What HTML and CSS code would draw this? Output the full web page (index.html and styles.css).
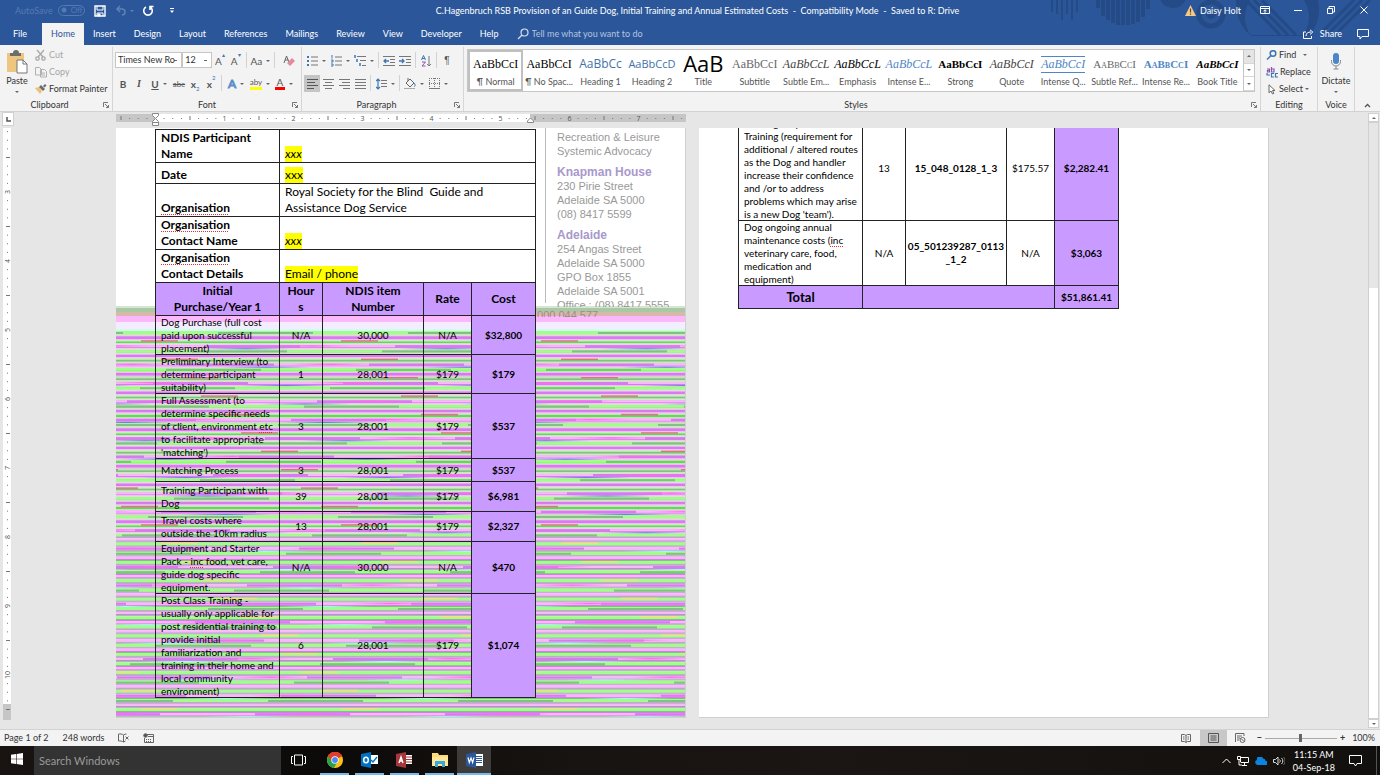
FILE: index.html
```html
<!DOCTYPE html>
<html lang="en">
<head>
    <meta charset="utf-8">
    <title>C.Hagenbruch RSB Provision of an Guide Dog - Word</title>
    <meta name="viewport" content="width=device-width,initial-scale=1.0">
    <link rel="stylesheet" href="styles.css">
    <script src="script.js" defer></script>
</head>
<body>
    <header class="top">
        <svg class="top-art" width="340" height="36" viewBox="0 0 340 36" fill="none" stroke="#244b86">
            <path d="M12 0v12M17 0v14M22 0v20M27 0v14M32 0v20M37 0v12" stroke-width="2"/>
            <path d="M58 0v8M63 0v16M68 0v20M73 0v23M78 0v25M83 0v25M88 0v25M93 0v24M98 0v22M103 0v17M108 0v9" stroke-width="4"/>
            <circle cx="133" cy="-6" r="14" fill="#244b86" stroke="none"/>
            <circle cx="171" cy="14" r="12" stroke-width="5"/>
            <circle cx="171" cy="14" r="5" fill="#244b86" stroke="none"/>
            <path d="M196 0a42 42 0 0 0 14 35h60a42 42 0 0 0 8-35h-14a32 32 0 1 1-54 0z" fill="#244b86" stroke="none"/>
            <path d="M206 0l34 35M214 0l34 35M222 0l34 35" stroke-width="3"/>
            <path d="M282 32l32-32M290 32l32-32M298 32l32-32" stroke-width="3"/>
        </svg>
        <div class="titlebar">
            <div class="quick">
                <label class="autosave">AutoSave <input type="checkbox" disabled><span class="toggle">Off</span></label>
                <button class="qbtn" aria-label="Save"><svg width="12" height="12" viewBox="0 0 12 12" fill="none" stroke="#fff"><path d="M1 1h10v10H1z" stroke-width="1.4"/><path d="M3 1v4h6V1M3 11V8h6v3" /><path d="M4 9h2v2H4z" fill="#fff"/></svg></button>
                <button class="qbtn dim" aria-label="Undo"><svg width="12" height="12" viewBox="0 0 12 12" fill="none" stroke="#5e82b8" stroke-width="1.5"><path d="M5 1L2 4l3 3M2 4h5a3 3 0 0 1 0 6"/></svg><i class="caret"></i></button>
                <button class="qbtn" aria-label="Redo"><svg width="12" height="12" viewBox="0 0 12 12" fill="none" stroke="#fff" stroke-width="1.6"><path d="M4 2a4.300 4.300 0 1 0 4 0M8 5V1.500h3.500"/></svg></button>
                <button class="qbtn" aria-label="Customize"><svg width="6" height="6" viewBox="0 0 6 6"><path d="M1 .5h4" stroke="#fff"/><path d="M1 2.500h4L3 5z" fill="#fff"/></svg></button>
            </div>
            <div class="doc-title">C.Hagenbruch RSB Provision of an Guide Dog, Initial Training and Annual Estimated Costs &nbsp;-&nbsp; Compatibility Mode &nbsp;-&nbsp; Saved to R: Drive</div>
            <div class="window">
                <span class="user"><svg width="11" height="11" viewBox="0 0 11 11"><path d="M5.500 0L11 11H0z" fill="#f5c987"/><path d="M5.500 3.500v4M5.500 8.500v1.300" stroke="#5b4a2c" stroke-width="1.200"/></svg> Daisy Holt</span>
                <button aria-label="Ribbon display"><svg width="10" height="8" viewBox="0 0 10 8" fill="none" stroke="#fff"><path d="M.5.5h9v7h-9zM.5 2.500h9M5 7V4M3.500 5L5 3.800 6.500 5"/></svg></button>
                <button aria-label="Minimize"><svg width="8" height="8" viewBox="0 0 8 8" stroke="#fff"><path d="M0 4.500h8"/></svg></button>
                <button aria-label="Restore"><svg width="8" height="8" viewBox="0 0 8 8" fill="none" stroke="#fff"><path d="M.5 2.500h5v5h-5zM2 2V.5h5.500V6H6"/></svg></button>
                <button aria-label="Close"><svg width="8" height="8" viewBox="0 0 8 8" stroke="#fff"><path d="M.5.5l7 7M7.500.5l-7 7"/></svg></button>
            </div>
        </div>
        <nav class="tabs">
            <button class="file">File</button>
            <button class="active">Home</button>
            <button>Insert</button>
            <button>Design</button>
            <button>Layout</button>
            <button>References</button>
            <button>Mailings</button>
            <button>Review</button>
            <button>View</button>
            <button>Developer</button>
            <button>Help</button>
            <label class="tell"><svg width="12" height="12" viewBox="0 0 12 12" fill="none" stroke="#d5dff0" stroke-width="1.200"><circle cx="7.500" cy="4.500" r="3.500"/><path d="M5 7L1 11"/></svg><input type="text" placeholder="Tell me what you want to do" aria-label="Tell me what you want to do"></label>
            <button class="share"><svg width="11" height="10" viewBox="0 0 11 10" fill="none" stroke="#fff"><path d="M3 3H.5v6.500h8V7M3 7c0-3 2-4 5-4M7 .8L9.800 3 7 5.500"/></svg> Share</button>
            <button class="comment" aria-label="Comments"><svg width="12" height="11" viewBox="0 0 12 11" fill="none" stroke="#fff"><path d="M.5.5h11v7H5L3 10V7.500H.5z"/></svg></button>
        </nav>
    </header>

    <section class="ribbon">
        <div class="group clipboard">
            <div class="body">
                <button class="big"><svg width="22" height="24" viewBox="0 0 22 24"><rect x="1" y="3" width="17" height="19" fill="#edc77f"/><path d="M4 3h3a3 3 0 0 1 6 0h2v3H4z" fill="#6d6d6d"/><path d="M11 10h6l4 4v9H11z" fill="#fff" stroke="#777"/><path d="M17 10v4h4" fill="none" stroke="#777"/></svg>Paste<i class="caret"></i></button>
                <div class="stack">
                    <button class="off"><svg width="12" height="12" viewBox="0 0 12 12" fill="none" stroke="#a9a9a9" stroke-width="1.300"><path d="M2 1l6 7M9 1L3 8"/><circle cx="2.500" cy="9.500" r="1.700"/><circle cx="8.500" cy="9.500" r="1.700"/></svg>Cut</button>
                    <button class="off"><svg width="12" height="12" viewBox="0 0 12 12" fill="#f3f3f3" stroke="#b0b0b0"><path d="M.5 1.500h4l2 2V9h-6zM5.500 3.500h4l2 2V11h-6zM7 7h3M7 9h3"/></svg>Copy</button>
                    <button><svg width="12" height="12" viewBox="0 0 12 12"><path d="M0 5l4-1 3 4-2 3c-1-2-3-3-5-6z" fill="#edc077"/><path d="M4 4l2-2 4 4-2 2zM8 3l2-2 1.500 1.500-2 2z" fill="#6b6b6b"/></svg>Format Painter</button>
                </div>
            </div>
            <div class="label">Clipboard<svg class="launch" width="6" height="6"><use href="#launch"/></svg></div>
        </div>

        <div class="group font">
            <div class="body rows">
                <div class="tools">
                    <select class="face" aria-label="Font"><option>Times New Ro</option></select>
                    <select class="size" aria-label="Font size"><option>12</option></select>
                    <button class="grow">A<sup>▴</sup></button>
                    <button class="shrink">A<sup>▾</sup></button>
                    <hr>
                    <button class="drop">Aa<i class="caret"></i></button>
                    <hr>
                    <button class="last" aria-label="Clear formatting"><svg width="12" height="12" viewBox="0 0 12 12"><path d="M1 8L3.500 1 6 7M2 5h3" fill="none" stroke="#666"/><path d="M4 8l5-5 3 3-5 5z" fill="#e58a9b"/></svg></button>
                </div>
                <div class="tools">
                    <button><b>B</b></button>
                    <button><em class="ital">I</em></button>
                    <button class="drop"><u><b>U</b></u><i class="caret"></i></button>
                    <button><s>abc</s></button>
                    <button><b>x</b><sub>2</sub></button>
                    <button><b>x</b><sup>2</sup></button>
                    <hr>
                    <button class="drop"><span class="glow">A</span><i class="caret"></i></button>
                    <button class="drop"><span class="mark">aby</span><i class="caret"></i></button>
                    <button class="drop"><span class="ink">A</span><i class="caret"></i></button>
                </div>
            </div>
            <div class="label">Font<svg class="launch" width="6" height="6"><use href="#launch"/></svg></div>
        </div>

        <div class="group paragraph">
            <div class="body rows">
                <div class="tools">
                    <button class="drop" aria-label="Bullets"><svg width="11" height="12" viewBox="0 0 11 12"><path d="M0 2h2M0 6h2M0 10h2" stroke="#3b77b7" stroke-width="2"/><path d="M4 2h7M4 6h7M4 10h7" stroke="#777"/></svg><i class="caret"></i></button>
                    <button class="drop" aria-label="Numbering"><svg width="11" height="12" viewBox="0 0 11 12"><path d="M1 0v3.500M0 5h2v2H0M0 9h2v2H0" stroke="#3b77b7" fill="none"/><path d="M4 2h7M4 6h7M4 10h7" stroke="#777"/></svg><i class="caret"></i></button>
                    <button class="drop" aria-label="Multilevel list"><svg width="12" height="12" viewBox="0 0 12 12"><path d="M1 0v3M3 4v3M6 8v3" stroke="#3b77b7" stroke-width="1.500"/><path d="M3 1.500h9M6 5.500h6M8 10.500h4" stroke="#777"/></svg><i class="caret"></i></button>
                    <hr>
                    <button aria-label="Decrease indent"><svg width="12" height="12" viewBox="0 0 12 12" fill="none"><path d="M0 1.500h12M7 4.500h5M7 7.500h5M0 10.500h12" stroke="#777"/><path d="M6 6H1M3 4L1 6l2 2" stroke="#3b77b7" stroke-width="1.300"/></svg></button>
                    <button aria-label="Increase indent"><svg width="12" height="12" viewBox="0 0 12 12" fill="none"><path d="M0 1.500h12M7 4.500h5M7 7.500h5M0 10.500h12" stroke="#777"/><path d="M0 6h5M3 4l2 2-2 2" stroke="#3b77b7" stroke-width="1.300"/></svg></button>
                    <hr>
                    <button aria-label="Sort"><svg width="11" height="12" viewBox="0 0 11 12" fill="none"><path d="M.5 5l2-4.500 2 4.500M1 3.500h3" stroke="#3b77b7"/><path d="M1 7h3.500L1 11h3.500" stroke="#8a55b0"/><path d="M8 1v10M6 9l2 2 2-2" stroke="#777"/></svg></button>
                    <hr>
                    <button class="pilcrow">¶</button>
                </div>
                <div class="tools">
                    <button class="on" aria-label="Align left"><svg width="11" height="11"><path d="M0 1.500h11M0 4.500h8M0 7.500h11M0 10.500h7" stroke="#555"/></svg></button>
                    <button aria-label="Center"><svg width="11" height="11"><path d="M0 1.500h11M2 4.500h7M0 7.500h11M2 10.500h7" stroke="#777"/></svg></button>
                    <button aria-label="Align right"><svg width="11" height="11"><path d="M0 1.500h11M3 4.500h8M0 7.500h11M4 10.500h7" stroke="#777"/></svg></button>
                    <button aria-label="Justify"><svg width="11" height="11"><path d="M0 1.500h11M0 4.500h11M0 7.500h11M0 10.500h11" stroke="#777"/></svg></button>
                    <hr>
                    <button class="drop" aria-label="Line spacing"><svg width="11" height="12" viewBox="0 0 11 12" fill="none"><path d="M2 1v10M0 3l2-2 2 2M0 9l2 2 2-2" stroke="#3b77b7" stroke-width="1.200"/><path d="M5 2.500h6M5 5.500h6M5 8.500h6" stroke="#777"/></svg><i class="caret"></i></button>
                    <hr>
                    <button class="drop" aria-label="Shading"><svg width="12" height="12" viewBox="0 0 12 12" fill="none" stroke="#666"><path d="M2 5l4-4 4 4-4 4zM4 3V0"/><path d="M10 5c2 2 1 4 0 3" stroke="#3b77b7"/><path d="M0 10.500h11" stroke="#aaa"/></svg><i class="caret"></i></button>
                    <button class="drop" aria-label="Borders"><svg width="11" height="11" fill="none" stroke="#777"><path d="M.5 0v11M5.500 0v11M10.500 0v11M0 .5h11M0 5.500h11" stroke-dasharray="1 1"/><path d="M0 10.500h11"/></svg><i class="caret"></i></button>
                </div>
            </div>
            <div class="label">Paragraph<svg class="launch" width="6" height="6"><use href="#launch"/></svg></div>
        </div>

        <div class="group styles">
            <div class="body gallery">
                <button class="style on"><span>AaBbCcI</span>¶ Normal</button>
                <button class="style"><span>AaBbCcI</span>¶ No Spac...</button>
                <button class="style"><span class="h1">AaBbCc</span>Heading 1</button>
                <button class="style"><span class="h2">AaBbCcD</span>Heading 2</button>
                <button class="style"><span class="title">AaB</span>Title</button>
                <button class="style"><span class="gray">AaBbCcI</span>Subtitle</button>
                <button class="style"><span class="dark it">AaBbCcL</span>Subtle Em...</button>
                <button class="style"><span class="it">AaBbCcL</span>Emphasis</button>
                <button class="style"><span class="blue it">AaBbCcL</span>Intense E...</button>
                <button class="style"><span class="bold">AaBbCcI</span>Strong</button>
                <button class="style"><span class="dark it">AaBbCcI</span>Quote</button>
                <button class="style"><span class="blue it lined">AaBbCcI</span>Intense Q...</button>
                <button class="style"><span class="gray caps">AaBbCcI</span>Subtle Ref...</button>
                <button class="style"><span class="blue bold caps">AaBbCcI</span>Intense Re...</button>
                <button class="style"><span class="bold it">AaBbCcI</span>Book Title</button>
                <div class="scroller">
                    <button class="dim" aria-label="Previous styles"><i class="caret up"></i></button>
                    <button aria-label="Next styles"><i class="caret"></i></button>
                    <button aria-label="More styles"><i class="caret more"></i></button>
                </div>
            </div>
            <div class="label">Styles<svg class="launch" width="6" height="6"><use href="#launch"/></svg></div>
        </div>

        <div class="group editing">
            <div class="body">
                <div class="stack">
                    <button><svg width="11" height="10" viewBox="0 0 11 10" fill="none" stroke="#3b77b7" stroke-width="1.500"><circle cx="7" cy="3.500" r="2.800"/><path d="M5 5.500L1 9.500"/></svg>Find <i class="caret far"></i></button>
                    <button><svg width="12" height="11" viewBox="0 0 12 11" fill="none" stroke-width="1.200"><path d="M1 2h2.500v3H1.500V3.500H3.500M5.500 0v5H8V2H5.500" stroke="#8a55b0"/><path d="M8 6.500H5.500v3.500H8M12 6.500H9.500V10H12" stroke="#3b77b7"/><path d="M1 6v2h3" stroke="#3b77b7"/></svg>Replace</button>
                    <button><svg width="11" height="11" viewBox="0 0 11 11" fill="#fff" stroke="#666"><path d="M3 .8v8l2-1.800 1.500 3 1.300-.6L6.500 6.500H9z"/></svg>Select<i class="caret"></i></button>
                </div>
            </div>
            <div class="label">Editing</div>
        </div>

        <div class="group voice">
            <div class="body">
                <button class="big"><svg width="14" height="24" viewBox="0 0 14 24" fill="none"><rect x="4" y="3" width="6" height="11" rx="3" fill="#4a86c8"/><path d="M2.500 10v1.500a4.500 4.500 0 0 0 9 0V10M7 16v3M4.500 19h5" stroke="#888"/></svg>Dictate<i class="caret"></i></button>
            </div>
            <div class="label">Voice</div>
        </div>
        <button class="collapse" aria-label="Collapse the ribbon"><svg width="7" height="5" fill="none" stroke="#555" stroke-width="1.300"><path d="M1 4l2.500-2.500L6 4"/></svg></button>
    </section>

    <main class="workspace">
        <div class="left-rail">
            <button class="tabstop" aria-label="Left tab"><svg width="5" height="5" fill="none" stroke="#555" stroke-width="1.500"><path d="M1 0v4h4"/></svg></button>
            <svg class="vruler" id="vruler" width="8" height="592"></svg>
        </div>
        <div class="canvas">
            <svg class="hruler" id="hruler" width="570" height="15"></svg>
            <div class="pages">
                <article class="page first">
                    <svg class="stripes" id="stripes" width="570" height="411"></svg>
                    <table class="costs">
                        <colgroup><col class="c1"><col class="c2"><col class="c3"><col class="c4"><col class="c5"></colgroup>
                        <tbody class="info">
                            <tr><th>NDIS Participant<br>Name</th><td colspan="4"><mark><i>xxx</i></mark></td></tr>
                            <tr class="short"><th>Date</th><td colspan="4"><mark>xxx</mark></td></tr>
                            <tr><th><u class="typo">Organisation</u></th><td colspan="4">Royal Society for the Blind&nbsp; Guide and<br>Assistance Dog Service</td></tr>
                            <tr><th><u class="typo">Organisation</u><br>Contact Name</th><td colspan="4"><mark><i>xxx</i></mark></td></tr>
                            <tr><th><u class="typo">Organisation</u><br>Contact Details</th><td colspan="4"><mark>Email / phone</mark></td></tr>
                        </tbody>
                        <tbody class="head">
                            <tr><th>Initial<br>Purchase/Year 1</th><th>Hour<br>s</th><th>NDIS item<br>Number</th><th>Rate</th><th>Cost</th></tr>
                        </tbody>
                        <tbody class="items">
                            <tr><td><p>Dog Purchase (full cost<br>paid upon successful<br>placement)</p></td><td>N/A</td><td>30,000</td><td>N/A</td><td>$32,800</td></tr>
                            <tr><td><p>Preliminary Interview (to<br>determine participant<br>suitability)</p></td><td>1</td><td>28,001</td><td>$179</td><td>$179</td></tr>
                            <tr><td><p>Full Assessment (to<br>determine specific needs<br>of client, environment <u class="typo">etc</u><br>to facilitate appropriate<br>'matching')</p></td><td>3</td><td>28,001</td><td>$179</td><td>$537</td></tr>
                            <tr class="h23"><td><p>Matching Process</p></td><td>3</td><td>28,001</td><td>$179</td><td>$537</td></tr>
                            <tr class="h30"><td><p>Training Participant with<br>Dog</p></td><td>39</td><td>28,001</td><td>$179</td><td>$6,981</td></tr>
                            <tr class="h30"><td><p>Travel costs where<br>outside the 10km radius</p></td><td>13</td><td>28,001</td><td>$179</td><td>$2,327</td></tr>
                            <tr><td><p>Equipment and Starter<br>Pack - <u class="typo">inc</u> food, vet care,<br>guide dog specific<br>equipment.</p></td><td>N/A</td><td>30,000</td><td>N/A</td><td>$470</td></tr>
                            <tr><td><p>Post Class Training -<br>usually only applicable for<br>post residential training to<br>provide initial<br>familiarization and<br>training in their home and<br>local community<br>environment)</p></td><td>6</td><td>28,001</td><td>$179</td><td>$1,074</td></tr>
                        </tbody>
                    </table>
                    <aside class="letterhead">
                        <p>Recreation &amp; Leisure<br>Systemic Advocacy</p>
                        <p><b>Knapman House</b><br>230 Pirie Street<br>Adelaide SA 5000<br>(08) 8417 5599</p>
                        <p><b>Adelaide</b><br>254 Angas Street<br>Adelaide SA 5000<br>GPO Box 1855<br>Adelaide SA 5001</p>
                        <p class="cut">Office : (08) 8417 5555</p>
                        <p class="cut abn">000 044 577</p>
                    </aside>
                </article>
                <article class="page second">
                    <table class="costs">
                        <colgroup><col class="c1"><col class="c2"><col class="c3"><col class="c4"><col class="c5"></colgroup>
                        <tbody class="items codes">
                            <tr><td><p>Training Requirements<br>Training (requirement for<br>additional / altered routes<br>as the Dog and handler<br>increase their confidence<br>and /or to address<br>problems which may arise<br>is a new Dog 'team').</p></td><td>13</td><td>15_048_0128_1_3</td><td>$175.57</td><td>$2,282.41</td></tr>
                            <tr><td><p>Dog ongoing annual<br>maintenance costs (<u class="typo">inc</u><br>veterinary care, food,<br>medication and<br>equipment)</p></td><td>N/A</td><td>05_501239287_0113<br>_1_2</td><td>N/A</td><td>$3,063</td></tr>
                            <tr class="total h23"><th>Total</th><td colspan="3"></td><td>$51,861.41</td></tr>
                        </tbody>
                    </table>
                </article>
            </div>
        </div>
        <div class="scrollbar">
            <button aria-label="Scroll up"><i class="caret up"></i></button>
            <div class="track"><div class="thumb"></div></div>
            <button aria-label="Scroll down"><i class="caret"></i></button>
        </div>
    </main>

    <footer class="status">
        <span>Page 1 of 2</span>
        <span>248 words</span>
        <svg width="11" height="10" viewBox="0 0 11 10" fill="none" stroke="#666"><path d="M5.500 9V2C4 .8 2 .8.5 1v7c1.500-.2 3.500 0 5 1zM5.500 2c1-.8 2-1 3-1M5.500 9l2-1M7.500 3.500l3 3M10.500 3.500l-3 3"/></svg>
        <svg width="11" height="11" viewBox="0 0 11 11" fill="none" stroke="#666"><path d="M4 1.500h6.500v8h-9V5"/><circle cx="2.500" cy="2.500" r="1.800" fill="#555"/><path d="M3 6.500h1M5 6.500h1M7 6.500h1M3 8.500h1M5 8.500h1M7 8.500h1M5 3.500h5"/></svg>
        <div class="views">
            <button aria-label="Read mode"><svg width="10" height="9" viewBox="0 0 10 9" fill="none" stroke="#666"><path d="M5 1.500v7M.5.5h3L5 1.500 6.500.5h3v7h-3L5 8.500 3.500 7.500h-3zM2 3h1.500M2 5h1.500M6.500 3H8M6.500 5H8"/></svg></button>
            <button class="on" aria-label="Print layout"><svg width="11" height="10" fill="none" stroke="#555"><path d="M.5.5h10v9H.5zM2.500 3h6M2.500 5h6M2.500 7h6"/></svg></button>
            <button aria-label="Web layout"><svg width="11" height="10" viewBox="0 0 11 10" fill="none" stroke="#666"><path d="M.5 9V.5H9V3M2 3h5M2 5h3M2 7h2"/><circle cx="7.500" cy="7" r="2.500"/><path d="M6 5.500l3 3"/></svg></button>
        </div>
        <div class="zoom">
            <button>−</button>
            <input type="range" min="0" max="100" value="50" aria-label="Zoom">
            <button>+</button>
            <span>100%</span>
        </div>
    </footer>

    <div class="taskbar">
        <button class="start" aria-label="Start"><svg width="12" height="12" viewBox="0 0 12 12" fill="#fff"><path d="M0 1.700l5-.7v4.700H0zM5.600.9L12 0v5.700H5.600zM0 6.300h5V11l-5-.7zM5.600 6.300H12V12l-6.400-.9z"/></svg></button>
        <input class="search" type="text" placeholder="Search Windows" aria-label="Search Windows">
        <button class="app plain" aria-label="Task view"><svg width="15" height="12" viewBox="0 0 15 12" fill="none" stroke="#fff"><path d="M3.500 1h8v10h-8zM2 2.500H.5v7H2M13 2.500h1.500v7H13"/></svg></button>
        <button class="app" aria-label="Chrome"><svg width="16" height="16" viewBox="0 0 16 16"><circle cx="8" cy="8" r="8" fill="#fbc116"/><path d="M8 8L1.100 4A8 8 0 0 1 15 4.200z" fill="#e33b2e"/><path d="M8 8L1.100 4a8 8 0 0 0 5.800 11.900L11 9z" fill="#2aa24c"/><path d="M1.100 4A8 8 0 0 1 15 4.200H8L4.700 9.500z" fill="#e33b2e"/><circle cx="8" cy="8" r="3.700" fill="#fff"/><circle cx="8" cy="8" r="2.900" fill="#4a8af4"/></svg></button>
        <button class="app" aria-label="Outlook"><svg width="17" height="16" viewBox="0 0 17 16"><path d="M9 3h8v9H9z" fill="#fff"/><path d="M10 8l2 2 4-5" fill="none" stroke="#0072c6" stroke-width="1.400"/><path d="M0 2l10-2v16L0 14z" fill="#0072c6"/><ellipse cx="5" cy="8" rx="2.300" ry="2.800" fill="none" stroke="#fff" stroke-width="1.500"/></svg></button>
        <button class="app" aria-label="Access"><svg width="17" height="16" viewBox="0 0 17 16"><path d="M9 3h7v9H9z" fill="#fff"/><path d="M9 5h7M9 7.500h7M9 10h7" stroke="#a4373a"/><path d="M0 2l10-2v16L0 14z" fill="#a4373a"/><path d="M3 11l2-6 2 6M3.600 9h2.800" fill="none" stroke="#fff" stroke-width="1.400"/></svg></button>
        <button class="app" aria-label="File Explorer"><svg width="16" height="14" viewBox="0 0 16 14"><path d="M0 0h6l1 2h9v11H0z" fill="#fbdc7b"/><path d="M0 4h16v9H0z" fill="#ffe797"/><path d="M3 14V8h10v6h-3v-3H6v3z" fill="#36a9dd"/></svg></button>
        <button class="app on" aria-label="Word"><svg width="17" height="16" viewBox="0 0 17 16"><path d="M9 2h8v12H9z" fill="#fff"/><path d="M10 4.500h6M10 6.500h6M10 8.500h6M10 10.500h6" stroke="#2b579a"/><path d="M0 2l10-2v16L0 14z" fill="#2b579a"/><path d="M2 5.500l1.300 5L5 6l1.600 4.500L8 5.500" fill="none" stroke="#fff" stroke-width="1.200"/></svg></button>
        <div class="tray">
            <svg width="9" height="6" fill="none" stroke="#fff"><path d="M.5 5l4-4 4 4"/></svg>
            <svg width="12" height="10" viewBox="0 0 12 10" fill="none" stroke="#fff"><path d="M3.500 1.500h8v5h-8zM7.500 7v2.500M5 9.500h5"/><path d="M.5.500h3v3h-3zM2 4v5h3" fill="#111"/></svg>
            <svg width="12" height="8" viewBox="0 0 12 8" fill="#0a84de"><path d="M1 7a2.300 2.300 0 0 1 1-4A3 3 0 0 1 8 1.500 2.500 2.500 0 0 1 10.500 4 2 2 0 0 1 11 8H2z"/></svg>
            <svg width="12" height="10" viewBox="0 0 12 10" fill="none" stroke="#ddd"><path d="M.5 3.500h2L5 1v8L2.500 6.500h-2zM6.500 3.500c1 1 1 2 0 3M8.500 2c1.800 2 1.800 4 0 6"/><path d="M10.500 1c2 2.500 2 5.500 0 8" stroke="#666"/></svg>
            <div class="clock">11:15 AM<br>04-Sep-18</div>
            <svg width="13" height="12" viewBox="0 0 13 12" fill="none" stroke="#fff"><path d="M.5.500h12v8H8L6.500 11 5 8.500H.5z"/></svg>
        </div>
    </div>

    <svg width="0" height="0" class="defs">
        <symbol id="launch" viewBox="0 0 6 6"><path d="M.5 5V.5H5M2 2l3.500 3.500M5.500 3v2.500H3" fill="none" stroke="#777"/></symbol>
    </svg>
</body>
</html>
```
FILE: styles.css
```css
* {
    box-sizing: border-box;
}

body {
    margin: 0;
    height: 100vh;
    display: flex;
    flex-direction: column;
    overflow: hidden;
    font-family: Lato, "Open Sans", sans-serif;
    font-size: 9px;
    line-height: 12px;
    color: #333;
    background: #e6e6e6;
}

button {
    margin: 0;
    padding: 0;
    border: 0;
    background: none;
    font: inherit;
    color: inherit;
    white-space: nowrap;
}

svg {
    flex: none;
}

.defs {
    position: absolute;
}

.caret {
    display: inline-block;
    flex: none;
    border: 2px solid transparent;
    border-top-color: #666;
    border-bottom: 0;
}

.caret.up {
    border: 2px solid transparent;
    border-bottom-color: #666;
    border-top: 0;
}

.caret.more {
    box-shadow: 0 -3px 0 -1px #666;
}

.caret.far {
    margin-left: 5px;
}

/* title bar and tabs */
.top {
    position: relative;
    flex: none;
    background: #2b579a;
    color: #fff;
}

.top-art {
    position: absolute;
    top: 0;
    right: 0;
}

.titlebar,
.tabs {
    position: relative;
    display: flex;
}

.titlebar {
    height: 23px;
    align-items: center;
    padding-bottom: 2px;
}

.quick {
    flex: 1;
    display: flex;
    align-items: center;
    padding-left: 15px;
}

.autosave {
    display: flex;
    align-items: center;
    gap: 5px;
    width: 73px;
    color: #5479b3;
}

.autosave input {
    position: absolute;
    opacity: 0;
}

.toggle {
    border: 1px solid #5479b3;
    border-radius: 6px;
    width: 27px;
    height: 11px;
    line-height: 9px;
    font-size: 8px;
    padding-left: 12px;
    background: radial-gradient(circle at 5px 4px, #5479b3 2px, transparent 3px);
}

.qbtn {
    width: 24px;
    height: 16px;
    display: flex;
    align-items: center;
    justify-content: center;
    gap: 3px;
}

.qbtn.dim .caret {
    border-top-color: #5e82b8;
}

.doc-title {
    white-space: nowrap;
}

.window {
    flex: 1;
    display: flex;
    align-items: center;
    justify-content: flex-end;
}

.window button {
    width: 33px;
    height: 16px;
}

.user {
    display: flex;
    align-items: center;
    gap: 4px;
    margin-right: 7px;
}

.tabs {
    height: 22px;
}

.tabs button {
    padding: 0 9px;
}

.tabs .file {
    padding: 0 15px 0 13px;
}

.tabs .active {
    background: #f3f3f3;
    color: #2b579a;
}

.tell {
    flex: 1;
    display: flex;
    align-items: center;
    gap: 3px;
    padding-left: 9px;
}

.tell input {
    width: 160px;
    border: 0;
    padding: 0;
    background: none;
    font: inherit;
    color: #fff;
}

.tell input::placeholder {
    color: #b4c4de;
}

.tabs .share,
.tabs .comment {
    display: flex;
    align-items: center;
    gap: 6px;
}

.tabs .comment {
    padding: 0 11px 0 6px;
}

/* ribbon */
.ribbon {
    flex: none;
    display: flex;
    height: 67px;
    padding-top: 2px;
    background: #f3f3f3;
    border-bottom: 1px solid #d2d2d2;
}

.group {
    display: flex;
    flex-direction: column;
    border-right: 1px solid #d6d6d6;
}

.group .body {
    flex: 1;
    display: flex;
}

.label {
    position: relative;
    height: 12px;
    text-align: center;
}

.launch {
    position: absolute;
    right: 3px;
    top: 3px;
}

.clipboard { width: 113px; }
.font { width: 189px; }
.paragraph { width: 162px; }
.editing { width: 57px; }
.voice { width: 37px; }

.clipboard .label {
    padding-right: 13px;
}

.paragraph .label {
    padding-right: 12px;
}

.styles {
    flex: 1;
    min-width: 0;
}

.big {
    width: 34px;
    display: flex;
    flex-direction: column;
    align-items: center;
    padding-top: 3px;
    gap: 1px;
}

.voice .big {
    width: 100%;
}

.big .caret {
    margin-top: 3px;
}

.stack {
    display: flex;
    flex-direction: column;
    gap: 5px;
    padding: 2px 0 0 1px;
}

.stack button {
    display: flex;
    align-items: center;
    gap: 2px;
    height: 12px;
}

.editing .stack {
    padding-left: 5px;
}

.off {
    color: #a6a6a6;
}

.rows {
    flex-direction: column;
    padding: 5px 0 0 2px;
    gap: 6px;
}

.tools {
    display: flex;
    height: 17px;
}

.tools hr {
    width: 1px;
    height: 16px;
    margin: 0 2px;
    border: 0;
    background: #d2d2d2;
}

.tools button {
    width: 16px;
    display: flex;
    align-items: center;
    justify-content: center;
    font-size: 10px;
    color: #555;
}

.tools .drop {
    width: 24px;
    gap: 4px;
}

.tools .last {
    width: 24px;
}

.tools .on {
    background: #c5c5c5;
}

.tools select {
    appearance: none;
    border: 1px solid #c6c6c6;
    border-radius: 0;
    background: #fff linear-gradient(#666, #666) no-repeat right 4px center / 3px 1px;
    font: inherit;
    font-size: 9px;
    color: #333;
    padding: 0 2px;
    height: 16px;
}

.face { width: 68px; }
.size { width: 30px; }

.tools sup,
.tools sub {
    font-size: 6px;
    line-height: 6px;
    color: #3b77b7;
}

.tools sup { align-self: flex-start; }
.tools sub { align-self: flex-end; }

.tools s {
    font-size: 8px;
}

.ital {
    font-family: "Liberation Serif", serif;
    font-weight: bold;
}

.glow {
    font-size: 12px;
    color: #fff;
    -webkit-text-stroke: 1px #5a8fc8;
}

.mark,
.ink {
    line-height: 10px;
    border-bottom: 3px solid #ff0;
}

.mark { font-size: 8px; }

.ink {
    padding: 0 2px;
    border-color: #f00;
}

.pilcrow {
    font-family: "Liberation Sans", sans-serif;
}

/* style gallery */
.styles .gallery {
    flex: none;
    height: 43px;
    margin: 2px 5px 7px 3px;
    border: 1px solid #c6c6c6;
    background: #fff;
}

.styles .label {
    margin-top: auto;
    padding-right: 12px;
}

.style {
    flex: 1;
    min-width: 0;
    display: flex;
    flex-direction: column;
    align-items: center;
    padding-top: 3px;
    color: #555;
}

.style.on {
    padding-top: 1px;
    border: 2px solid #c0c0c0;
}

.style span {
    height: 23px;
    line-height: 22px;
    font-family: "Liberation Serif", serif;
    font-size: 12px;
    color: #000;
}

.style .h1,
.style .h2 {
    font-family: "Open Sans", sans-serif;
    color: #4472a8;
}

.style .h2,
.style .bold { font-size: 11px; }

.style .title {
    font-family: "Open Sans", sans-serif;
    font-size: 22px;
    line-height: 20px;
}

.style .gray { color: #666; }
.style .dark { color: #444; }
.style .blue { color: #4f86c6; }
.style .it { font-style: italic; }
.style .bold { font-weight: bold; }

.style .caps {
    font-size: 11px;
    font-variant: small-caps;
}

.style .lined {
    height: 17px;
    line-height: 14px;
    margin: 3px 0;
    border: solid #4f86c6;
    border-width: 1px 0;
}

.scroller {
    display: flex;
    flex-direction: column;
    width: 11px;
    border-left: 1px solid #c6c6c6;
}

.scroller button {
    flex: 1;
    display: flex;
    align-items: center;
    justify-content: center;
    border-bottom: 1px solid #d6d6d6;
}

.scroller .dim {
    background: #e4e4e4;
}

.collapse {
    width: 25px;
    align-self: flex-end;
}

/* document area */
.workspace {
    flex: 1;
    min-height: 0;
    display: flex;
}

.left-rail {
    width: 115px;
    padding-left: 2px;
}

.tabstop {
    display: flex;
    align-items: center;
    justify-content: center;
    width: 12px;
    height: 14px;
    background: #fff;
    border: 1px solid #d0d0d0;
    margin-bottom: 2px;
}

.vruler {
    display: block;
    margin-left: 1px;
    background: #fff;
}

.ruler-text {
    font-family: "Open Sans", sans-serif;
    font-size: 7px;
    fill: #555;
    text-anchor: middle;
}

.canvas {
    flex: 1;
    min-width: 0;
    display: flex;
    flex-direction: column;
}

.hruler {
    display: block;
    margin: 1px 0 0 1px;
}

.pages {
    display: flex;
    gap: 13px;
    padding-left: 1px;
}

.page {
    position: relative;
    display: flex;
    align-items: flex-start;
    width: 570px;
    height: 590px;
    overflow: hidden;
    background: #fff;
    border: solid #d0d0d0;
    border-width: 0 1px 1px 0;
}

.stripes {
    position: absolute;
    left: 0;
    bottom: 0;
}

.costs {
    position: relative;
    flex: none;
    width: 381px;
    margin: 1px 0 0 39px;
    table-layout: fixed;
    border-collapse: collapse;
    font-family: Lato, "Open Sans", sans-serif;
    color: #000;
}

.second .costs {
    margin-top: -12px;
}

.costs .c1 { width: 124px; }
.costs .c2 { width: 43px; }
.costs .c3 { width: 101px; }
.costs .c4 { width: 48px; }
.costs .c5 { width: 64px; }

.costs th,
.costs td {
    padding: 0;
    border: 1px solid #222;
    text-align: center;
    white-space: nowrap;
}

.info th,
.info td,
.head th {
    font-size: 12px;
    line-height: 16px;
}

.info .short { height: 21px; }

.costs .info th,
.costs .info td {
    padding-left: 5px;
    text-align: left;
    vertical-align: bottom;
}

mark {
    display: inline-block;
    background: #ff0;
}

.head th,
.items td:last-child,
.total th,
.total td {
    background: #c99aff;
}

.items td {
    font-size: 10px;
    line-height: 13px;
}

.costs .items td:first-child {
    padding-left: 5px;
    text-align: left;
}

.items p {
    margin: 0 0 -1px;
}

.items td:last-child,
.codes td:nth-child(3) {
    font-weight: bold;
}

.items .h23 { height: 23px; }
.items .h30 { height: 30px; }

.total th {
    font-size: 13px;
    line-height: 16px;
}

.typo {
    text-decoration: underline dotted #e03030 1px;
    text-underline-offset: 2px;
    text-decoration-skip-ink: none;
}

.letterhead {
    position: relative;
    margin-left: 9px;
    padding: 2px 0 0 11px;
    border-left: 1px solid #bbb;
    height: 175px;
    font-family: "Liberation Sans", sans-serif;
    font-size: 11px;
    line-height: 14px;
    white-space: nowrap;
    color: #999;
}

.letterhead p {
    margin: 0 0 7px;
}

.letterhead b {
    color: #a898cc;
    font-size: 12px;
}

.letterhead .cut {
    height: 9px;
    overflow: hidden;
    margin: -7px 0 0;
}

.letterhead .abn {
    height: 6px;
    line-height: 9px;
    margin: 4px 0 0 -20px;
    color: #a08c86;
}

.scrollbar {
    display: flex;
    flex-direction: column;
    width: 12px;
    padding: 1px 1px 1px 0;
}

.scrollbar button {
    height: 11px;
    display: flex;
    align-items: center;
    justify-content: center;
    background: #fff;
    border: 1px solid #d0d0d0;
}

.track {
    flex: 1;
    border: 1px solid #d0d0d0;
}

.thumb {
    margin-top: 165px;
    height: 430px;
    background: #fff;
}

/* status bar */
.status {
    flex: none;
    display: flex;
    align-items: center;
    gap: 14px;
    height: 17px;
    padding-left: 4px;
    background: #f3f3f3;
    border-top: 1px solid #d2d2d2;
}

.views {
    margin-left: auto;
    display: flex;
    align-self: stretch;
}

.views button {
    width: 27px;
    display: flex;
    align-items: center;
    justify-content: center;
}

.views .on {
    background: #c8c8c8;
}

.zoom {
    display: flex;
    align-items: center;
    gap: 3px;
    padding-right: 5px;
    margin-left: -11px;
}

.zoom button {
    font-weight: bold;
}

.zoom span {
    margin-left: 4px;
}

.zoom input {
    appearance: none;
    width: 72px;
    height: 10px;
    margin: 0;
    background: linear-gradient(#aaa, #aaa) no-repeat center / 100% 1px;
}

.zoom input::-webkit-slider-thumb {
    appearance: none;
    width: 3px;
    height: 8px;
    background: #666;
}

/* taskbar */
.taskbar {
    flex: none;
    display: flex;
    height: 29px;
    background: linear-gradient(90deg, #191411, #0c0a09 24%, #171310 40%, #1b1613 60%, #12100e);
    color: #fff;
}

.start {
    width: 34px;
}

.search {
    width: 247px;
    border: 0;
    padding: 0 5px;
    background: #333;
    font: inherit;
    font-size: 11px;
    color: #fff;
}

.search::placeholder {
    color: #9a9a9a;
}

.app {
    position: relative;
    width: 29px;
    margin: 0 3px;
    border-bottom: 2px solid #76b9ed;
    display: flex;
    align-items: center;
    justify-content: center;
}

.app.plain {
    border-color: transparent;
    margin-right: 4px;
}

.app.on {
    width: 34px;
    margin: 0;
    background: #3e3b39;
}

.tray {
    margin-left: auto;
    display: flex;
    align-items: center;
    gap: 6px;
    padding-right: 14px;
    margin-right: 3px;
    border-right: 1px solid #555;
}

.clock {
    padding: 0 8px 0 2px;
    text-align: center;
    line-height: 13px;
}
```
FILE: script.js
```js
const NS = 'http://www.w3.org/2000/svg';

function add(parent, name, attrs, text) {
    const el = document.createElementNS(NS, name);
    for (const key in attrs) {
        el.setAttribute(key, attrs[key]);
    }
    if (text !== undefined) {
        el.textContent = text;
    }
    parent.appendChild(el);
    return el;
}

const INCH = 69;

function horizontalRuler() {
    const svg = document.getElementById('hruler');
    add(svg, 'rect', {x: 0, y: 1, width: 570, height: 8, fill: '#c6c6c6'});
    add(svg, 'rect', {x: 39, y: 1, width: 375, height: 8, fill: '#fff'});
    for (let i = -4; i < 62; i++) {
        const x = 39.5 + i * INCH / 8;
        if (x > 568) {
            break;
        }
        if (i > 0 && i % 8 === 0) {
            add(svg, 'text', {x: x, y: 8, class: 'ruler-text'}, i / 8);
        } else if (i !== 0) {
            const tall = i % 4 === 0;
            add(svg, 'rect', {x: x - 0.5, y: tall ? 3 : 5, width: 1, height: tall ? 4 : 1, fill: '#777'});
        }
    }
    add(svg, 'path', {d: 'M36.500 .5h6v2l-3 3 3 3v4h-6v-4l3-3-3-3zM36.500 9.500h6', fill: '#fff', stroke: '#888'});
    add(svg, 'path', {d: 'M411.500 9.500v-1.500l3-3 3 3v1.500z', fill: '#fff', stroke: '#888'});
}

function verticalRuler() {
    const svg = document.getElementById('vruler');
    add(svg, 'rect', {x: 0, y: 576, width: 8, height: 16, fill: '#c6c6c6'});
    for (let i = -7; i < 61; i++) {
        const y = 64 + i * INCH / 8;
        if (y > 588) {
            break;
        }
        if (i % 8 === 0) {
            add(svg, 'text', {x: 0, y: 0, class: 'ruler-text', transform: `translate(7 ${y}) rotate(-90)`}, 3 + i / 8);
        } else {
            const tall = i % 4 === 0;
            add(svg, 'rect', {x: tall ? 3 : 4, y: y - 0.5, width: tall ? 4 : 1, height: 1, fill: '#777'});
        }
    }
}

// corrupted video memory look behind the lower part of page one
function stripes() {
    const svg = document.getElementById('stripes');
    const rect = (x, y, width, height, fill) => add(svg, 'rect', {x, y, width, height, fill});
    const defs = add(svg, 'defs', {});
    for (const [id, color] of [['blue', '#6d78f0'], ['cyan', '#a0ffff'], ['magenta', '#ff6cf0']]) {
        const g = add(defs, 'linearGradient', {id});
        add(g, 'stop', {offset: 0, 'stop-color': color, 'stop-opacity': 0});
        add(g, 'stop', {offset: 0.5, 'stop-color': color});
        add(g, 'stop', {offset: 1, 'stop-color': color, 'stop-opacity': 0});
    }

    const LIME = '#a3fd8b';
    const GREEN = '#82c184';
    const VIOLET = '#d67cee';
    const PINK = '#f8b9f8';
    const upper = [[LIME, 1.2], [GREEN, 2], [LIME, 1], [PINK, 1], [VIOLET, 2.8], [PINK, 1.2]];
    const lower = [[LIME, 2.8], [GREEN, 1], [VIOLET, 1], [PINK, 2.2], [VIOLET, 1.2], [GREEN, 1]];

    let n = 0;
    for (let y = 25; y < 411; y += 9.2) {
        const low = y > 225;
        let top = y;
        for (const [fill, height] of low ? lower : upper) {
            rect(0, top, 570, height, fill);
            top += height;
        }
        // colour swaps drifting to the left
        const pair = n % 2 ? [VIOLET, PINK] : [GREEN, LIME];
        const edge = ((482 - 13 * n) % 190 + 190) % 190;
        for (let x = edge - 190, k = 0; x < 570; x += 95, k++) {
            rect(x, y + (n % 2 ? 5 : 1), 95, 2, pair[k % 2]);
        }
        // coloured dashes drifting to the right
        if (n % 2) {
            const start = (10 * n + 15) % 200;
            for (let x = start - 200; x < 570; x += 200) {
                rect(x, y, 37, 1.5, low ? '#f8dc84' : '#d87a7c');
                rect(x + 60, y + 8, 90, 1.5, low ? 'url(#cyan)' : 'url(#blue)');
                rect(x + 130, y + 5, 80, 1.5, 'url(#magenta)');
            }
        }
        n++;
    }

    rect(0, 0, 570, 2, '#d5e6d0');
    rect(0, 2, 570, 4, '#a9c9a6');
    rect(0, 6, 570, 4, '#d7b8aa');
    rect(0, 10, 570, 6, '#fbb8fb');
    rect(0, 16, 570, 7, '#f3edff');
    rect(0, 23, 570, 2, '#d0fbf0');
}

horizontalRuler();
verticalRuler();
stripes();
```
